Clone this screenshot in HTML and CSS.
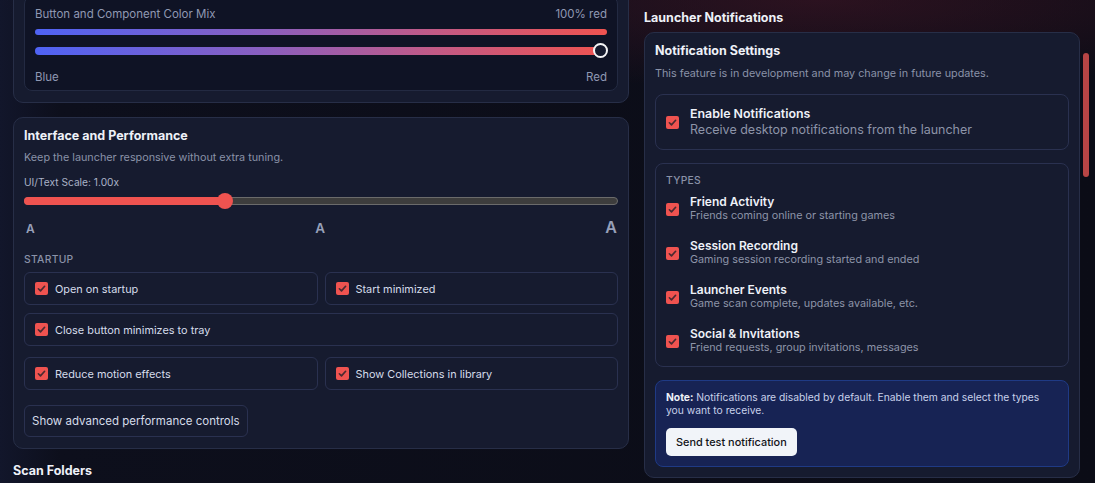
FILE: index.html
```html
<!DOCTYPE html>
<html lang="en">
<head>
	<meta charset="UTF-8">
	<title>Settings</title>
	<link rel="stylesheet" href="styles.css">
</head>
<body>
    <div class="page">
        <div class="col col-left">
            <section class="card card-mix">
                <div class="mix-box">
                    <div class="mix-head">
                        <span>Button and Component Color Mix</span>
                        <span>100% red</span>
                    </div>
                    <div class="mix-bar"></div>
                    <div class="mix-slider"><span class="mix-thumb"></span></div>
                    <div class="mix-ends">
                        <span>Blue</span>
                        <span>Red</span>
                    </div>
                </div>
            </section>

            <section class="card card-perf">
                <h2 class="card-title">Interface and Performance</h2>
                <p class="card-desc">Keep the launcher responsive without extra tuning.</p>
                <div class="scale-label">UI/Text Scale: 1.00x</div>
                <div class="scale-slider">
                    <div class="scale-fill" style="width: 33.8%"></div>
                    <span class="scale-thumb" style="left: 33.8%"></span>
                </div>
                <div class="scale-marks">
                    <span class="a-sm">A</span>
                    <span class="a-md">A</span>
                    <span class="a-lg">A</span>
                </div>

                <div class="group-label">STARTUP</div>
                <div class="opt-grid">
                    <label class="opt"><span class="check"><svg viewBox="0 0 12 12"><path d="M2.6 6.3l2.3 2.3 4.5-5"/></svg></span>Open on startup</label>
                    <label class="opt"><span class="check"><svg viewBox="0 0 12 12"><path d="M2.6 6.3l2.3 2.3 4.5-5"/></svg></span>Start minimized</label>
                    <label class="opt opt-wide"><span class="check"><svg viewBox="0 0 12 12"><path d="M2.6 6.3l2.3 2.3 4.5-5"/></svg></span>Close button minimizes to tray</label>
                </div>
                <div class="opt-grid opt-grid-second">
                    <label class="opt"><span class="check"><svg viewBox="0 0 12 12"><path d="M2.6 6.3l2.3 2.3 4.5-5"/></svg></span>Reduce motion effects</label>
                    <label class="opt"><span class="check"><svg viewBox="0 0 12 12"><path d="M2.6 6.3l2.3 2.3 4.5-5"/></svg></span>Show Collections in library</label>
                </div>
                <button class="btn-ghost">Show advanced performance controls</button>
            </section>

            <h2 class="section-title">Scan Folders</h2>
        </div>

        <div class="col col-right">
            <h2 class="section-title">Launcher Notifications</h2>
            <div class="notif-wrap">
                <section class="card card-notif">
                    <h3 class="card-title">Notification Settings</h3>
                    <p class="card-desc">This feature is in development and may change in future updates.</p>

                    <div class="sub-box enable-box">
                        <label class="item">
                            <span class="check"><svg viewBox="0 0 12 12"><path d="M2.6 6.3l2.3 2.3 4.5-5"/></svg></span>
                            <span class="item-text">
                                <span class="enable-title">Enable Notifications</span>
                                <span class="enable-sub">Receive desktop notifications from the launcher</span>
                            </span>
                        </label>
                    </div>

                    <div class="sub-box types-box">
                        <div class="group-label">TYPES</div>
                        <ul class="type-list">
                            <li class="item">
                                <span class="check"><svg viewBox="0 0 12 12"><path d="M2.6 6.3l2.3 2.3 4.5-5"/></svg></span>
                                <span class="item-text">
                                    <span class="item-title">Friend Activity</span>
                                    <span class="item-sub">Friends coming online or starting games</span>
                                </span>
                            </li>
                            <li class="item">
                                <span class="check"><svg viewBox="0 0 12 12"><path d="M2.6 6.3l2.3 2.3 4.5-5"/></svg></span>
                                <span class="item-text">
                                    <span class="item-title">Session Recording</span>
                                    <span class="item-sub">Gaming session recording started and ended</span>
                                </span>
                            </li>
                            <li class="item">
                                <span class="check"><svg viewBox="0 0 12 12"><path d="M2.6 6.3l2.3 2.3 4.5-5"/></svg></span>
                                <span class="item-text">
                                    <span class="item-title">Launcher Events</span>
                                    <span class="item-sub">Game scan complete, updates available, etc.</span>
                                </span>
                            </li>
                            <li class="item">
                                <span class="check"><svg viewBox="0 0 12 12"><path d="M2.6 6.3l2.3 2.3 4.5-5"/></svg></span>
                                <span class="item-text">
                                    <span class="item-title">Social &amp; Invitations</span>
                                    <span class="item-sub">Friend requests, group invitations, messages</span>
                                </span>
                            </li>
                        </ul>
                    </div>

                    <div class="note-box">
                        <p class="note-text"><b>Note:</b> Notifications are disabled by default. Enable them and select the types you want to receive.</p>
                        <button class="btn-light">Send test notification</button>
                    </div>
                </section>
                <div class="scrollbar"><div class="scroll-thumb"></div></div>
            </div>
        </div>
    </div>
</body>
</html>
```

FILE: styles.css
```css
* {
    box-sizing: border-box;
}

html,
body {
    margin: 0;
    padding: 0;
    height: 100%;
    overflow: hidden;
}

body {
    font-family: Inter, "Noto Sans", sans-serif;
    color: #dfe4f0;
    background:
        radial-gradient(ellipse 520px 90px at 820px 0, rgba(70, 22, 38, .55), rgba(70, 22, 38, 0)),
        radial-gradient(ellipse 300px 60px at 300px 0, rgba(60, 25, 50, .4), rgba(60, 25, 50, 0)),
        linear-gradient(90deg, #12162b 0, #0d0f1c 60px, #0b0c16 100%);
}

h2,
h3,
p,
ul,
li {
    margin: 0;
    padding: 0;
}

li {
    list-style: none;
}

.page {
    display: flex;
    gap: 15px;
    padding-left: 13px;
}

.col-left {
    width: 616px;
    margin-top: -15px;
}

.col-right {
    width: 445px;
    padding-top: 10px;
}

.card {
    background: #161b2f;
    border: 1px solid #272e47;
    border-radius: 10px;
}

.section-title,
.card-title {
    font-size: 12.5px;
    font-weight: 700;
    line-height: 16px;
    color: #eef1f8;
}

.card-desc {
    font-size: 10.8px;
    line-height: 14px;
    color: #8a92a8;
}

/* color mix */
.card-mix {
    padding: 10px 10px 11px;
}

.mix-box {
    background: #0f1325;
    border: 1px solid #232a42;
    border-radius: 8px;
    padding: 10px 10px 6px;
}

.mix-head,
.mix-ends {
    display: flex;
    justify-content: space-between;
    font-size: 11.5px;
    line-height: 14px;
    color: #8f98b3;
}

.mix-bar {
    height: 6px;
    margin-top: 8px;
    border-radius: 3px;
    background: linear-gradient(90deg, #4f63f5, #8a5fc0 40%, #c25a86 70%, #ef5350);
}

.mix-slider {
    position: relative;
    height: 8px;
    margin-top: 12px;
    border-radius: 4px;
    background: linear-gradient(90deg, #4f63f5, #8a5fc0 40%, #c25a86 70%, #ef5350);
}

.mix-thumb {
    position: absolute;
    right: -1px;
    top: -4px;
    width: 15px;
    height: 15px;
    border-radius: 50%;
    border: 2px solid #f4f4f6;
    background: #151a2e;
}

.mix-ends {
    margin-top: 15px;
}

/* interface and performance */
.card-perf {
    margin-top: 14px;
    padding: 10px 10px 11px;
}

.card-perf .card-desc {
    margin-top: 7px;
}

.scale-label {
    margin-top: 10px;
    font-size: 10.2px;
    line-height: 14px;
    color: #aab2c7;
}

.scale-slider {
    position: relative;
    height: 8px;
    margin-top: 8px;
    border-radius: 4px;
    background: #3d3d3d;
    border: 1px solid #6b6b6b;
}

.scale-fill {
    margin: -1px 0 0 -1px;
    height: 8px;
    border-radius: 4px 0 0 4px;
    background: #ef5350;
}

.scale-thumb {
    position: absolute;
    top: -5px;
    width: 16px;
    height: 16px;
    margin-left: -8px;
    border-radius: 50%;
    background: #ef5350;
}

.scale-marks {
    display: flex;
    justify-content: space-between;
    align-items: baseline;
    margin-top: 13px;
    padding: 0 1px 0 2px;
    font-weight: 600;
    color: #97a0b9;
    line-height: 18px;
}

.a-sm {
    font-size: 12px;
}

.a-md {
    font-size: 13.5px;
}

.a-lg {
    font-size: 16px;
}

.group-label {
    margin-top: 15px;
    font-size: 10.3px;
    line-height: 12px;
    font-weight: 500;
    letter-spacing: .3px;
    color: #8a92a8;
}

.opt-grid {
    display: grid;
    grid-template-columns: 1fr 1fr;
    gap: 8px 7px;
    margin-top: 7px;
}

.opt-grid-second {
    margin-top: 11px;
}

.opt {
    display: flex;
    align-items: center;
    gap: 7px;
    height: 33px;
    padding: 0 10px;
    border: 1px solid #2a3150;
    border-radius: 6px;
    font-size: 10.9px;
    color: #d5dbea;
}

.opt-wide {
    grid-column: 1 / 3;
}

.check {
    flex: none;
    width: 13px;
    height: 13px;
    border-radius: 2px;
    background: #ef5350;
    display: flex;
    align-items: center;
    justify-content: center;
}

.check svg {
    width: 11px;
    height: 11px;
    fill: none;
    stroke: #4a2a30;
    stroke-width: 1.8;
    stroke-linecap: round;
    stroke-linejoin: round;
}

.btn-ghost {
    display: block;
    height: 32px;
    margin-top: 15px;
    padding: 0 7px;
    background: transparent;
    border: 1px solid #2a3150;
    border-radius: 6px;
    font-family: inherit;
    font-size: 11.5px;
    color: #d5dbea;
}

.col-left .section-title {
    margin-top: 14px;
}

/* notifications */
.notif-wrap {
    display: flex;
    gap: 3px;
    margin-top: 6px;
}

.card-notif {
    width: 436px;
    padding: 10px 10px 10px;
}

.card-notif .card-desc {
    margin-top: 8px;
}

.sub-box {
    margin-top: 13px;
    border: 1px solid #2a3150;
    border-radius: 8px;
}

.enable-box {
    padding: 11px 10px;
}

.item {
    display: flex;
    align-items: center;
    gap: 11px;
}

.item-text {
    display: flex;
    flex-direction: column;
}

.enable-title {
    font-size: 12.4px;
    font-weight: 600;
    line-height: 16px;
    color: #eef1f8;
}

.enable-sub {
    font-size: 12.5px;
    line-height: 16px;
    color: #8d94a8;
}

.types-box {
    padding: 10px 10px 11px;
}

.types-box .group-label {
    margin-top: 0;
}

.type-list {
    display: flex;
    flex-direction: column;
    gap: 15px;
    margin-top: 8px;
}

.type-list .check {
    margin-top: 1px;
}

.item-title {
    font-size: 12px;
    font-weight: 600;
    line-height: 15px;
    color: #eef1f8;
}

.item-sub {
    font-size: 10.8px;
    line-height: 14px;
    color: #8d94a8;
}

.note-box {
    margin-top: 13px;
    padding: 10px;
    background: #172354;
    border: 1px solid #1f3a85;
    border-radius: 8px;
}

.note-text {
    font-size: 10.3px;
    line-height: 13px;
    color: #c8d1ea;
}

.note-text b {
    color: #eef1f8;
}

.btn-light {
    display: block;
    height: 28px;
    margin-top: 11px;
    padding: 0 10px;
    background: #f1f4f9;
    border: 0;
    border-radius: 5px;
    font-family: inherit;
    font-size: 10.9px;
    font-weight: 500;
    color: #111318;
}

.scrollbar {
    width: 6px;
}

.scroll-thumb {
    height: 124px;
    margin-top: 21px;
    border-radius: 3px;
    background: #b84545;
}
```
